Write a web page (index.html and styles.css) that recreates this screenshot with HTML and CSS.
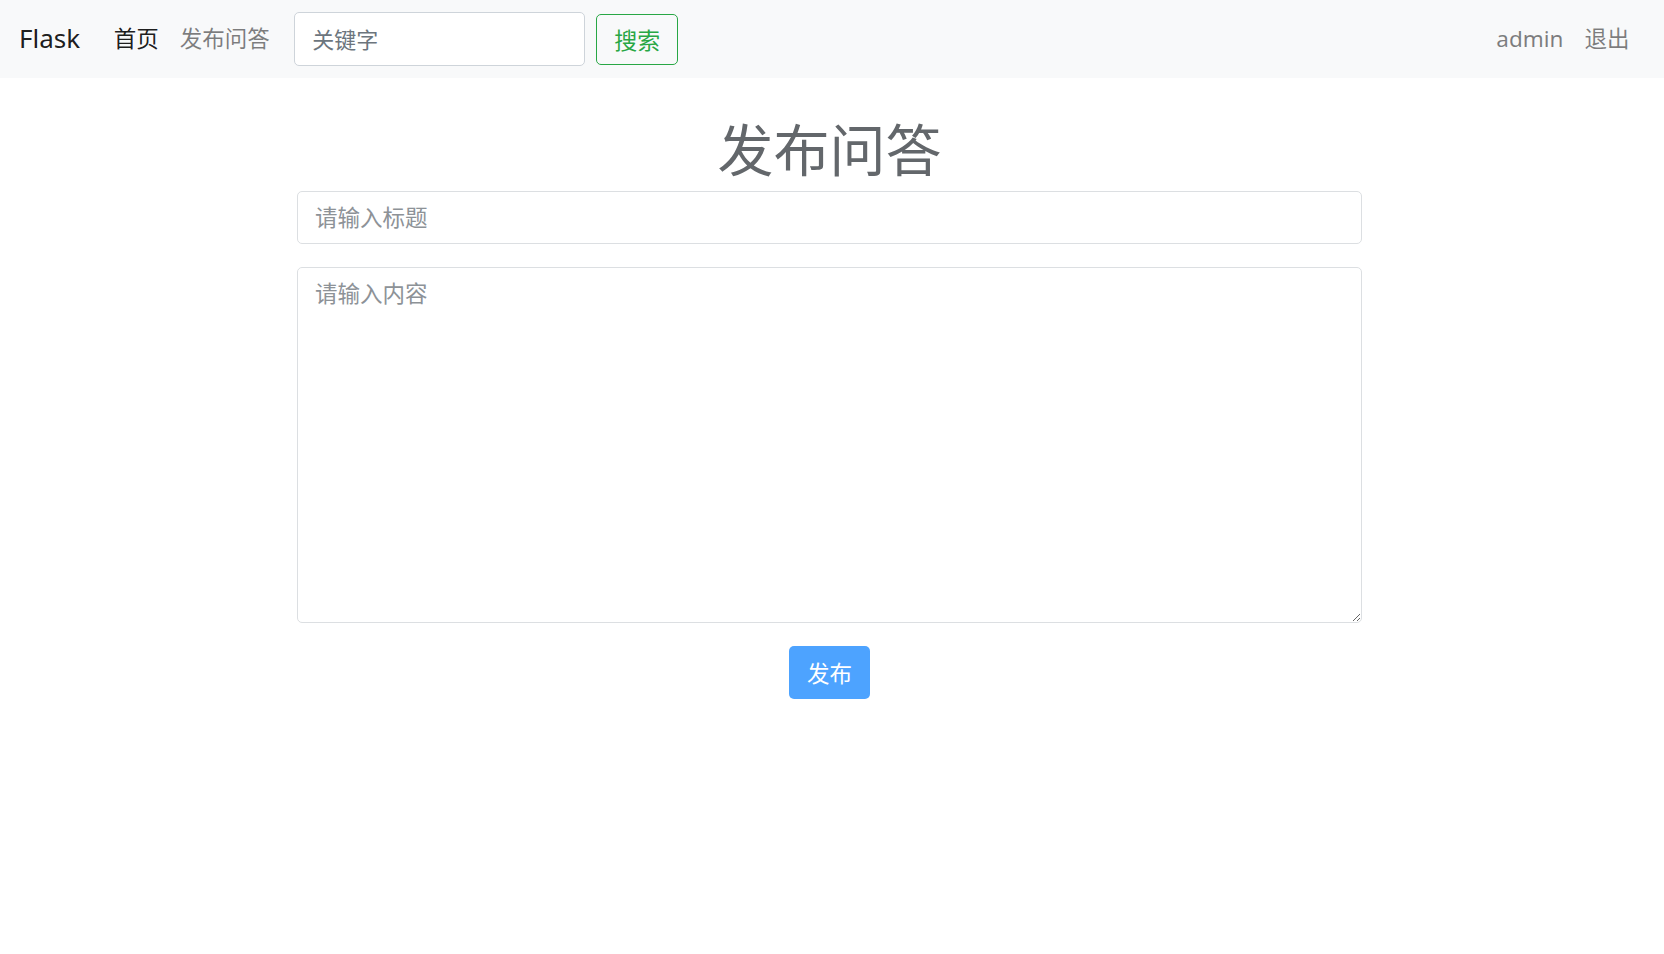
FILE: index.html
```html
<!DOCTYPE html>
<html lang="zh-CN">
<head>
  <meta charset="UTF-8" />
  <meta name="viewport" content="width=device-width, initial-scale=1.0"/>
  <title>发布问答</title>
  <link rel="stylesheet" href="styles.css">
</head>
<body>
  <nav class="navbar">
    <a class="brand" href="#">Flask</a>
    <ul class="nav-links">
      <li><a class="nav-link active" href="#">首页</a></li>
      <li><a class="nav-link" href="#">发布问答</a></li>
    </ul>
    <form class="search">
      <input class="search-input" type="text" placeholder="关键字" />
      <button class="btn-search" type="button">搜索</button>
    </form>
    <ul class="nav-links user">
      <li><a class="nav-link" href="#">admin</a></li>
      <li><a class="nav-link" href="#">退出</a></li>
    </ul>
  </nav>

  <main class="main">
    <h1 class="page-title">发布问答</h1>
    <form class="qa-form">
      <input class="field" type="text" placeholder="请输入标题" />
      <textarea class="field content" placeholder="请输入内容"></textarea>
      <button class="btn-submit" type="button">发布</button>
    </form>
  </main>
</body>
</html>
```

FILE: styles.css
```css
body {
  margin: 0;
  background: #fff;
  color: #212529;
  font-family: "Segoe UI", "Noto Sans", "Noto Sans CJK SC", sans-serif;
}
a {
  text-decoration: none;
}
ul {
  list-style: none;
  margin: 0;
  padding: 0;
}

/* top bar */
.navbar {
  display: flex;
  align-items: center;
  height: 78px;
  padding: 0 24px 0 19px;
  background: #f8f9fa;
  box-sizing: border-box;
}
.brand {
  font-size: 26px;
  line-height: 1;
  color: rgba(0, 0, 0, .9);
  margin-right: 23px;
  padding-bottom: 2px;
}
.nav-links {
  display: flex;
  align-items: center;
}
.nav-link {
  display: block;
  padding: 0 10.5px;
  font-size: 22.5px;
  line-height: 1.5;
  color: rgba(0, 0, 0, .5);
}
.nav-link.active {
  color: rgba(0, 0, 0, .9);
}
.search {
  display: flex;
  align-items: center;
  margin-left: 14px;
}
.search-input {
  width: 291px;
  height: 54px;
  box-sizing: border-box;
  padding: 0 17px;
  font: inherit;
  font-size: 22px;
  color: #495057;
  border: 1px solid #ced4da;
  border-radius: 5px;
  background: #fff;
  outline: none;
}
.search-input::placeholder {
  color: #6c757d;
}
.btn-search {
  margin-left: 11px;
  height: 51px;
  padding: 0 17px;
  font: inherit;
  font-size: 23px;
  color: #28a745;
  background: transparent;
  border: 1px solid #28a745;
  border-radius: 5px;
  cursor: pointer;
}
.user {
  margin-left: auto;
}

/* publish form */
.main {
  display: flex;
  flex-direction: column;
  align-items: center;
  padding-right: 5px;
}
.page-title {
  margin: 38px 0 8px;
  font-size: 56px;
  font-weight: 400;
  line-height: 67px;
  color: #63676b;
}
.qa-form {
  width: 1065px;
  display: flex;
  flex-direction: column;
  align-items: center;
}
.field {
  width: 100%;
  height: 53px;
  box-sizing: border-box;
  padding: 0 17px;
  font: inherit;
  font-size: 22.5px;
  color: #495057;
  border: 1px solid #dcdfe2;
  border-radius: 5px;
  outline: none;
}
.field::placeholder {
  color: #8d9297;
}
.content {
  height: 356px;
  margin-top: 23px;
  padding: 9px 17px;
  line-height: 1.5;
  resize: vertical;
}
.btn-submit {
  margin-top: 23px;
  width: 81px;
  height: 53px;
  font: inherit;
  font-size: 22.5px;
  color: #fff;
  background: #4da3ff;
  border: none;
  border-radius: 5px;
  cursor: pointer;
}
```
